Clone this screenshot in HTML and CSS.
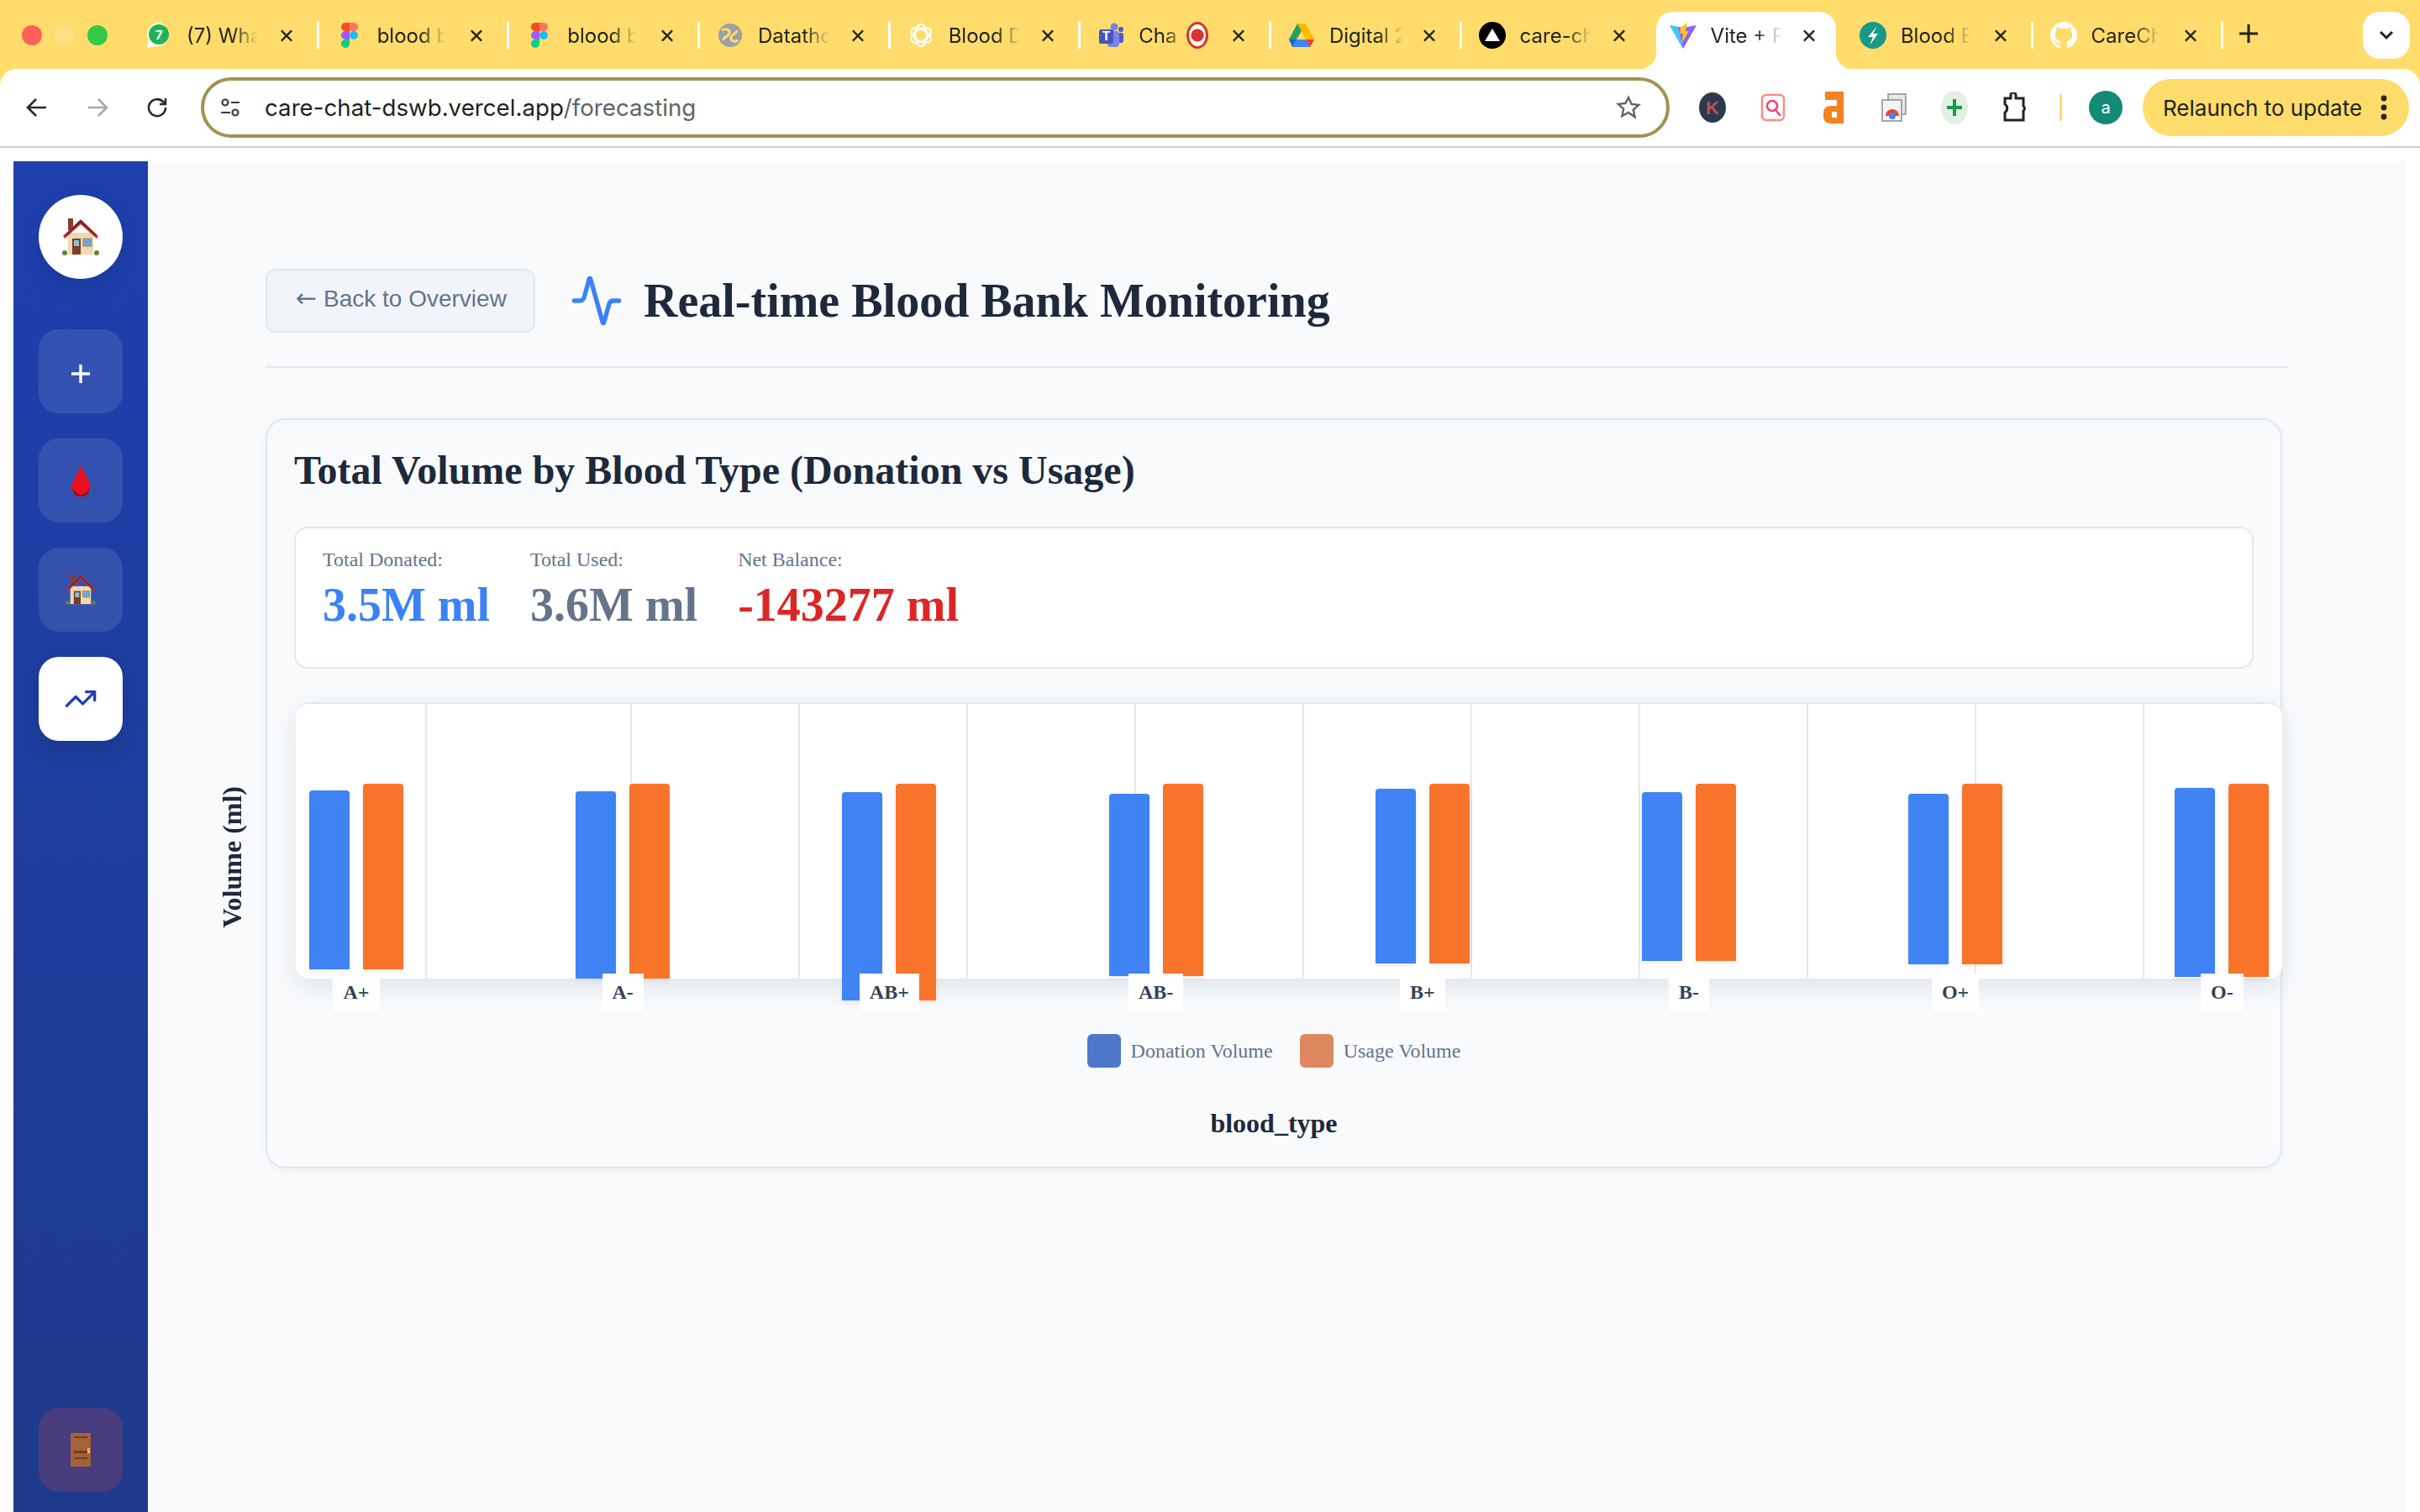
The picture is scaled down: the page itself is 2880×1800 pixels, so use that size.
FILE: index.html
```html
<!DOCTYPE html>
<html lang="en">
<head>
    <meta charset="UTF-8">
    <title>Vite + React</title>
    <link rel="stylesheet" href="styles.css">
</head>
<body>
    <svg class="icon-defs" width="0" height="0">
        <symbol id="close-x" viewBox="0 0 16 16"><path d="M1.5 1.5l13 13M14.5 1.5l-13 13" fill="none" stroke="#23231f" stroke-width="2.4"/></symbol>
        <symbol id="figma" viewBox="0 0 20 30">
            <path d="M5 0h5v10H5a5 5 0 0 1 0-10z" fill="#f24e1e"/>
            <path d="M10 0h5a5 5 0 0 1 0 10h-5z" fill="#ff7262"/>
            <path d="M5 10h5v10H5a5 5 0 0 1 0-10z" fill="#a259ff"/>
            <circle cx="15" cy="15" r="5" fill="#1abcfe"/>
            <path d="M5 20h5v5a5 5 0 1 1-5-5z" fill="#0acf83"/>
        </symbol>
        <symbol id="house" viewBox="0 0 44 46">
            <rect x="7" y="1" width="6" height="14" fill="#8a3a2c"/>
            <rect x="7" y="18" width="30" height="26" fill="#f0d9b0"/>
            <path d="M1 22L22 2l21 20-2 3L22 8 3 25z" fill="#c9322c"/>
            <path d="M22 3L3 21l1 1L22 6l18 16 1-1z" fill="#6d231f"/>
            <rect x="12" y="25" width="10" height="19" fill="#7a3f22"/>
            <rect x="14" y="27" width="6" height="7" fill="#8cc3e0"/>
            <rect x="25" y="25" width="10" height="9" fill="#6fa9cf" stroke="#9c8a66"/>
            <circle cx="3" cy="42" r="3" fill="#5c8a2e"/>
            <circle cx="41" cy="42" r="3" fill="#5c8a2e"/>
        </symbol>
        <symbol id="drop" viewBox="0 0 23 38">
            <path d="M11.5 0C9.500 9 3 15 1 23c-2 8 3 15 10.500 15S24 31 22 23C20 15 13.500 9 11.500 0z" fill="#e8101c"/>
            <path d="M2 27c1 6 5 9 9.500 9s8.500-3 9.500-9c1 8-4 11-9.500 11S1 35 2 27z" fill="#8f0a12"/>
        </symbol>
    </svg>

    <header class="browser">
        <div class="tabstrip">
            <div class="traffic">
                <span class="light light-red"></span>
                <span class="light light-amber"></span>
                <span class="light light-green"></span>
            </div>

            <div class="tab tab-sep">
                <svg class="favicon" viewBox="0 0 32 32"><path d="M16 1a14 14 0 0 0-12 21L2 31l9-2A14 14 0 1 0 16 1z" fill="#fff"/><circle cx="16" cy="15" r="12" fill="#1fb356"/><text x="16" y="21" class="favicon-text">7</text></svg>
                <span class="tab-title">(7) Wha</span>
                <svg class="tab-close"><use href="#close-x"/></svg>
            </div>
            <div class="tab tab-sep">
                <svg class="favicon favicon-figma"><use href="#figma"/></svg>
                <span class="tab-title">blood b</span>
                <svg class="tab-close"><use href="#close-x"/></svg>
            </div>
            <div class="tab tab-sep">
                <svg class="favicon favicon-figma"><use href="#figma"/></svg>
                <span class="tab-title">blood b</span>
                <svg class="tab-close"><use href="#close-x"/></svg>
            </div>
            <div class="tab tab-sep">
                <svg class="favicon" viewBox="0 0 32 32"><circle cx="16" cy="16" r="14" fill="#9aa0a6"/><path d="M6 10c6-3 10 0 9 4s-7 3-7 8M26 22c-6 3-10 0-9-4s7-3 7-8" fill="none" stroke="#ffdc6b" stroke-width="3"/></svg>
                <span class="tab-title">Datatho</span>
                <svg class="tab-close"><use href="#close-x"/></svg>
            </div>
            <div class="tab tab-sep">
                <svg class="favicon" viewBox="0 0 32 32"><g fill="none" stroke="#fff" stroke-width="2"><ellipse cx="16" cy="16" rx="7" ry="13"/><ellipse cx="16" cy="16" rx="7" ry="13" transform="rotate(60 16 16)"/><ellipse cx="16" cy="16" rx="7" ry="13" transform="rotate(120 16 16)"/></g></svg>
                <span class="tab-title">Blood D</span>
                <svg class="tab-close"><use href="#close-x"/></svg>
            </div>
            <div class="tab tab-sep">
                <svg class="favicon" viewBox="0 0 32 32"><circle cx="20" cy="6" r="4.5" fill="#7b83eb"/><circle cx="28" cy="9" r="3" fill="#5059c9"/><rect x="24" y="13" width="7" height="12" rx="3" fill="#5059c9"/><rect x="12" y="11" width="14" height="19" rx="4" fill="#7b83eb"/><rect x="2" y="9" width="17" height="17" rx="2" fill="#4b53bc"/><text x="10.5" y="22" class="favicon-text">T</text></svg>
                <span class="tab-title tab-title-short">Cha</span>
                <span class="record"></span>
                <svg class="tab-close"><use href="#close-x"/></svg>
            </div>
            <div class="tab tab-sep">
                <svg class="favicon" viewBox="0 0 32 32"><path d="M11 2h10L10 21H1z" fill="#1fa463"/><path d="M21 2l10 19H21L11 2z" fill="#ffba00"/><path d="M10 21h21l-5 9H5z" fill="#4285f4"/><path d="M26 30l5-9H21z" fill="#ea4335"/><path d="M5 30l5-9H1z" fill="#1967d2"/></svg>
                <span class="tab-title">Digital 2</span>
                <svg class="tab-close"><use href="#close-x"/></svg>
            </div>
            <div class="tab">
                <svg class="favicon" viewBox="0 0 32 32"><circle cx="16" cy="16" r="16" fill="#000"/><path d="M16 8l9 15H7z" fill="#fff"/></svg>
                <span class="tab-title">care-ch</span>
                <svg class="tab-close"><use href="#close-x"/></svg>
            </div>
            <div class="tab tab-active">
                <svg class="favicon" viewBox="0 0 32 32"><path d="M0 4l16 3 16-3-16 28z" fill="#8a63ff"/><path d="M0 4l10 2 6 26z" fill="#41c8fb"/><path d="M13 7l8-6-2 10h4l-9 15 2-12h-4z" fill="#ffc51c"/></svg>
                <span class="tab-title">Vite + R</span>
                <svg class="tab-close"><use href="#close-x"/></svg>
            </div>
            <div class="tab tab-sep">
                <svg class="favicon" viewBox="0 0 32 32"><circle cx="16" cy="16" r="16" fill="#169a87"/><path d="M21 5L10 18h6l-4 10 10-14h-6z" fill="#fff"/></svg>
                <span class="tab-title">Blood B</span>
                <svg class="tab-close"><use href="#close-x"/></svg>
            </div>
            <div class="tab tab-sep">
                <svg class="favicon" viewBox="0 0 16 16"><path fill="#fff" d="M8 0C3.58 0 0 3.58 0 8c0 3.54 2.29 6.53 5.47 7.59.4.07.55-.17.55-.38 0-.19-.01-.82-.01-1.49-2.01.37-2.53-.49-2.69-.94-.09-.23-.48-.94-.82-1.13-.28-.15-.68-.52-.01-.53.63-.01 1.08.58 1.23.82.72 1.21 1.87.87 2.33.66.07-.52.28-.87.51-1.07-1.78-.2-3.64-.89-3.64-3.95 0-.87.31-1.59.82-2.15-.08-.2-.36-1.02.08-2.12 0 0 .67-.21 2.2.82.64-.18 1.32-.27 2-.27s1.36.09 2 .27c1.53-1.04 2.2-.82 2.2-.82.44 1.1.16 1.92.08 2.12.51.56.82 1.27.82 2.15 0 3.07-1.87 3.75-3.65 3.95.29.25.54.73.54 1.48 0 1.07-.01 1.93-.01 2.2 0 .21.15.46.55.38A8.01 8.01 0 0 0 16 8c0-4.42-3.58-8-8-8z"/></svg>
                <span class="tab-title">CareCh</span>
                <svg class="tab-close"><use href="#close-x"/></svg>
            </div>

            <svg class="new-tab" viewBox="0 0 28 28"><path d="M14 3v22M3 14h22" stroke="#23231f" stroke-width="3" fill="none"/></svg>
            <div class="tab-search">
                <svg width="18" height="12" viewBox="0 0 18 12"><path d="M2 2l7 7 7-7" stroke="#23231f" stroke-width="3" fill="none"/></svg>
            </div>
        </div>

        <div class="toolbar">
            <div class="tool">
                <svg width="26" height="24" viewBox="0 0 26 24"><path d="M24 12H3M12 2L2 12l10 10" fill="none" stroke="#2a2a2a" stroke-width="2.6"/></svg>
            </div>
            <div class="tool">
                <svg width="26" height="24" viewBox="0 0 26 24"><path d="M2 12h21M14 2l10 10-10 10" fill="none" stroke="#a8a8a8" stroke-width="2.6"/></svg>
            </div>
            <div class="tool">
                <svg width="28" height="28" viewBox="0 0 28 28"><path d="M23 14a10 10 0 1 1-3-7l3 3M23 3v7h-7" fill="none" stroke="#2a2a2a" stroke-width="2.6"/></svg>
            </div>

            <div class="omnibox">
                <svg class="site-icon" width="24" height="24" viewBox="0 0 24 24"><g fill="none" stroke="#3c3c3c" stroke-width="2.2"><circle cx="6" cy="6" r="3.5"/><path d="M13 6h10M1 18h11"/><circle cx="18" cy="18" r="3.5"/></g></svg>
                <span class="url"><span class="url-host">care-chat-dswb.vercel.app</span>/forecasting</span>
                <svg class="star" width="30" height="30" viewBox="0 0 30 30"><path d="M15 3l3.6 8 8.6.9-6.4 5.8 1.8 8.5L15 21l-7.6 4.2 1.8-8.5-6.4-5.8 8.6-.9z" fill="none" stroke="#5f6368" stroke-width="2.4"/></svg>
            </div>

            <div class="extensions">
                <div class="tool"><svg width="32" height="36" viewBox="0 0 32 36"><ellipse cx="16" cy="18" rx="16" ry="18" fill="#2b3a4f"/><text x="16" y="26" class="ext-k">K</text></svg></div>
                <div class="tool"><svg width="30" height="34" viewBox="0 0 30 34"><rect x="2" y="2" width="26" height="30" rx="5" fill="#fff" stroke="#ff8a80" stroke-width="2.5"/><circle cx="14" cy="15" r="6" fill="none" stroke="#e8457a" stroke-width="2.5"/><path d="M18 20l6 7" stroke="#e8457a" stroke-width="2.5"/></svg></div>
                <div class="tool"><svg width="24" height="38" viewBox="0 0 24 38"><path d="M2 0h22v38H8a8 8 0 0 1-8-8v-5a8 8 0 0 1 8-8h8v-7H2zM10 24v7h6v-7z" fill="#f58220" fill-rule="evenodd"/></svg></div>
                <div class="tool"><svg width="30" height="34" viewBox="0 0 30 34"><rect x="8" y="1" width="21" height="24" fill="#e8e8e8" stroke="#8c8c8c" stroke-width="1.5"/><rect x="1" y="8" width="23" height="25" fill="#f4f4f4" stroke="#8c8c8c" stroke-width="1.5"/><path d="M5 27a8 8 0 0 1 16 0z" fill="#ea4335"/><circle cx="13" cy="27" r="4" fill="#4285f4"/></svg></div>
                <div class="tool"><svg width="32" height="40" viewBox="0 0 32 40"><ellipse cx="16" cy="20" rx="16" ry="20" fill="#e3f1e4"/><path d="M16 10v20M7 20h18" stroke="#169c4f" stroke-width="4"/></svg></div>
                <div class="tool"><svg width="30" height="36" viewBox="0 0 30 36"><path d="M3 7h7V3a3 3 0 0 1 6 0v4h9v9a4 4 0 0 1 0 6v11H3V24a6 6 0 0 0 0-10z" fill="none" stroke="#23231f" stroke-width="3"/></svg></div>
            </div>
            <span class="tool-divider"></span>
            <span class="avatar">a</span>
            <div class="relaunch">
                <span>Relaunch to update</span>
                <svg width="8" height="30" viewBox="0 0 8 30"><circle cx="4" cy="4" r="3.4" fill="#23231f"/><circle cx="4" cy="15" r="3.4" fill="#23231f"/><circle cx="4" cy="26" r="3.4" fill="#23231f"/></svg>
            </div>
        </div>
    </header>

    <div class="app">
        <aside class="sidebar">
            <div class="logo"><svg class="emoji-house-lg"><use href="#house"/></svg></div>
            <nav class="nav">
                <a class="nav-btn">
                    <svg width="24" height="24" viewBox="0 0 24 24" class="nav-plus"><path d="M12 1v22M1 12h22" stroke="#fff" stroke-width="3.4" fill="none"/></svg>
                </a>
                <a class="nav-btn"><svg class="emoji-drop"><use href="#drop"/></svg></a>
                <a class="nav-btn"><svg class="emoji-house"><use href="#house"/></svg></a>
                <a class="nav-btn nav-btn-active">
                    <svg width="40" height="40" viewBox="0 0 24 24" fill="none" stroke="#1e40af" stroke-width="2" stroke-linecap="round" stroke-linejoin="round"><polyline points="22 7 13.5 15.5 8.5 10.5 2 17"/><polyline points="16 7 22 7 22 13"/></svg>
                </a>
            </nav>
            <a class="nav-btn nav-btn-logout">
                <svg width="24" height="40" viewBox="0 0 24 40"><rect width="24" height="40" fill="#a5603c"/><g fill="#6f3d24"><rect x="4" y="4" width="16" height="2"/><rect x="4" y="21" width="16" height="3"/><rect x="4" y="29" width="16" height="2"/></g><rect x="20" y="18" width="3" height="6" fill="#e8c23a"/></svg>
            </a>
        </aside>

        <main class="main">
            <div class="page-head">
                <button type="button" class="back-btn"><span class="back-arrow">←</span> Back to Overview</button>
                <svg class="head-icon" width="64" height="64" viewBox="0 0 24 24" fill="none" stroke="#3b82f6" stroke-width="2" stroke-linecap="round" stroke-linejoin="round"><path d="M22 12h-2.48a2 2 0 0 0-1.93 1.46l-2.35 8.36a.25.25 0 0 1-.48 0L9.24 2.18a.25.25 0 0 0-.48 0l-2.35 8.36A2 2 0 0 1 4.49 12H2"/></svg>
                <h1>Real-time Blood Bank Monitoring</h1>
            </div>

            <section class="card">
                <h2>Total Volume by Blood Type (Donation vs Usage)</h2>

                <div class="stats">
                    <div class="stat">
                        <div class="stat-label">Total Donated:</div>
                        <div class="stat-value stat-blue">3.5M ml</div>
                    </div>
                    <div class="stat">
                        <div class="stat-label">Total Used:</div>
                        <div class="stat-value stat-slate">3.6M ml</div>
                    </div>
                    <div class="stat">
                        <div class="stat-label">Net Balance:</div>
                        <div class="stat-value stat-red">-143277 ml</div>
                    </div>
                </div>

                <div class="chart">
                    <div class="y-title">Volume (ml)</div>
                    <div class="plot">
                        <div class="grid-lines">
                            <span></span><span></span><span></span><span></span><span></span><span></span>
                            <span></span><span></span><span></span><span></span><span></span>
                        </div>
                        <div class="group">
                            <div class="bars">
                                <div class="bar bar-blue" style="margin-top:103px;height:213px"></div>
                                <div class="bar bar-orange" style="margin-top:95px;height:221px"></div>
                            </div>
                            <span class="tick">A+</span>
                        </div>
                        <div class="group">
                            <div class="bars">
                                <div class="bar bar-blue" style="margin-top:104px;height:223px"></div>
                                <div class="bar bar-orange" style="margin-top:95px;height:232px"></div>
                            </div>
                            <span class="tick">A-</span>
                        </div>
                        <div class="group">
                            <div class="bars">
                                <div class="bar bar-blue" style="margin-top:105px;height:248px"></div>
                                <div class="bar bar-orange" style="margin-top:95px;height:258px"></div>
                            </div>
                            <span class="tick">AB+</span>
                        </div>
                        <div class="group">
                            <div class="bars">
                                <div class="bar bar-blue" style="margin-top:107px;height:217px"></div>
                                <div class="bar bar-orange" style="margin-top:95px;height:229px"></div>
                            </div>
                            <span class="tick">AB-</span>
                        </div>
                        <div class="group">
                            <div class="bars">
                                <div class="bar bar-blue" style="margin-top:101px;height:208px"></div>
                                <div class="bar bar-orange" style="margin-top:95px;height:214px"></div>
                            </div>
                            <span class="tick">B+</span>
                        </div>
                        <div class="group">
                            <div class="bars">
                                <div class="bar bar-blue" style="margin-top:105px;height:201px"></div>
                                <div class="bar bar-orange" style="margin-top:95px;height:211px"></div>
                            </div>
                            <span class="tick">B-</span>
                        </div>
                        <div class="group">
                            <div class="bars">
                                <div class="bar bar-blue" style="margin-top:107px;height:203px"></div>
                                <div class="bar bar-orange" style="margin-top:95px;height:215px"></div>
                            </div>
                            <span class="tick">O+</span>
                        </div>
                        <div class="group">
                            <div class="bars">
                                <div class="bar bar-blue" style="margin-top:100px;height:225px"></div>
                                <div class="bar bar-orange" style="margin-top:95px;height:230px"></div>
                            </div>
                            <span class="tick">O-</span>
                        </div>
                    </div>

                    <div class="legend">
                        <span class="legend-swatch swatch-blue"></span>
                        <span class="legend-text">Donation Volume</span>
                        <span class="legend-swatch swatch-orange"></span>
                        <span class="legend-text">Usage Volume</span>
                    </div>
                    <div class="x-title">blood_type</div>
                </div>
            </section>
        </main>
    </div>
</body>
</html>
```

FILE: styles.css
```css
* {
    box-sizing: border-box;
}
html, body {
    height: 100%;
}
body {
    margin: 0;
    background: #fff;
    display: flex;
    flex-direction: column;
    overflow: hidden;
    font-family: "Liberation Serif", serif;
}
.icon-defs {
    position: absolute;
}

/* browser chrome */
.browser {
    background: #ffdc6b;
    font-family: Inter, "Liberation Sans", sans-serif;
    color: #23231f;
}
.tabstrip {
    display: flex;
    height: 82px;
    padding-left: 26px;
}
.traffic {
    display: flex;
    align-items: center;
    gap: 15px;
    height: 84px;
    margin-right: 21px;
    width: 104px;
}
.light {
    width: 24px;
    height: 24px;
    border-radius: 50%;
}
.light-red {
    background: #ff6058;
}
.light-amber {
    background: #ffe184;
}
.light-green {
    background: #35c94a;
}
.tab {
    position: relative;
    width: 226.67px;
    height: 68px;
    margin-top: 14px;
    padding: 0 29px 12px 22px;
    display: flex;
    align-items: center;
    font-size: 24px;
    flex-shrink: 0;
}
.tab-sep::after {
    content: "";
    position: absolute;
    right: -2px;
    top: 12px;
    width: 3px;
    height: 32px;
    background: #fff;
}
.tab-active {
    width: 214px;
    margin: 14px 6.33px 0;
    padding: 0 24px 12px 16px;
    background: #fff;
    border-radius: 20px 20px 0 0;
}
.tab-active::before,
.tab-active::after {
    content: "";
    position: absolute;
    bottom: 0;
    width: 20px;
    height: 20px;
}
.tab-active::before {
    left: -20px;
    background: radial-gradient(circle at 0 0, transparent 20px, #fff 20.5px);
}
.tab-active::after {
    right: -20px;
    background: radial-gradient(circle at 100% 0, transparent 20px, #fff 20.5px);
}
.favicon {
    width: 32px;
    height: 32px;
    flex-shrink: 0;
}
.favicon-figma {
    width: 20px;
    margin: 0 6px;
}
.favicon-text {
    font: bold 15px Inter, sans-serif;
    fill: #fff;
    text-anchor: middle;
}
.tab-title {
    margin-left: 17px;
    white-space: nowrap;
    -webkit-mask-image: linear-gradient(90deg, #000 calc(100% - 34px), transparent calc(100% - 4px));
    mask-image: linear-gradient(90deg, #000 calc(100% - 34px), transparent calc(100% - 4px));
}
.tab-title-short {
    -webkit-mask-image: linear-gradient(90deg, #000 calc(100% - 14px), rgba(0, 0, 0, 0.45));
    mask-image: linear-gradient(90deg, #000 calc(100% - 14px), rgba(0, 0, 0, 0.45));
}
.tab-close {
    width: 16px;
    height: 15px;
    margin-left: auto;
    flex-shrink: 0;
}
.record {
    width: 26px;
    height: 32px;
    margin-left: 12px;
    border-radius: 50%;
    border: 3px solid #d9342b;
    background: radial-gradient(circle, #d9342b 0 7px, #fff 8px);
    flex-shrink: 0;
}
.new-tab {
    width: 28px;
    height: 28px;
    margin: 26px 0 0 18px;
}
.tab-search {
    width: 56px;
    height: 56px;
    margin: 14px 12px 0 auto;
    border-radius: 20px;
    background: #fff;
    display: flex;
    align-items: center;
    justify-content: center;
}

.toolbar {
    display: flex;
    align-items: center;
    height: 94px;
    padding-left: 8px;
    background: #fff;
    border-radius: 20px 20px 0 0;
    border-bottom: 2px solid #cfcfcf;
}
.tool {
    width: 72px;
    display: flex;
    justify-content: center;
    align-items: center;
    flex-shrink: 0;
}
.omnibox {
    display: flex;
    align-items: center;
    width: 1748px;
    height: 72px;
    margin-left: 15px;
    padding: 0 30px 0 19px;
    border: 4px solid #a09352;
    border-radius: 36px;
}
.site-icon {
    flex-shrink: 0;
}
.url {
    margin-left: 29px;
    font-size: 27.7px;
    color: #5f6368;
}
.url-host {
    color: #1f1f1f;
}
.star {
    margin-left: auto;
}
.extensions {
    display: flex;
    margin-left: 15px;
}
.ext-k {
    font: bold 22px "Liberation Sans", sans-serif;
    fill: #c0504d;
    text-anchor: middle;
}
.tool-divider {
    width: 3px;
    height: 32px;
    margin-left: 17px;
    background: #ffdc6b;
}
.avatar {
    width: 40px;
    height: 40px;
    margin-left: 32px;
    border-radius: 50%;
    background: #138a76;
    color: #fff;
    font-size: 20px;
    display: flex;
    align-items: center;
    justify-content: center;
}
.relaunch {
    display: flex;
    align-items: center;
    justify-content: space-between;
    width: 317px;
    height: 68px;
    margin-left: 24px;
    padding: 0 26px 0 24px;
    border-radius: 34px;
    background: #ffdc6b;
    font-size: 26px;
    white-space: nowrap;
}

/* app */
.app {
    flex: 1;
    min-height: 0;
    display: flex;
    margin: 16px 16px 0;
    background: #f8fafc;
}
.sidebar {
    width: 160px;
    padding: 40px 0 24px;
    display: flex;
    flex-direction: column;
    align-items: center;
    background: linear-gradient(180deg, #1e40af, #1e3a8a);
}
.logo {
    width: 100px;
    height: 100px;
    margin-bottom: 60px;
    border-radius: 50%;
    background: #fff;
    box-shadow: 0 8px 24px rgba(0, 0, 0, 0.12);
    display: flex;
    align-items: center;
    justify-content: center;
}
.emoji-house-lg {
    width: 44px;
    height: 46px;
}
.emoji-house {
    width: 36px;
    height: 38px;
}
.emoji-drop {
    width: 23px;
    height: 38px;
}
.nav {
    display: flex;
    flex-direction: column;
    gap: 30px;
}
.nav-btn {
    width: 100px;
    height: 100px;
    border-radius: 24px;
    background: rgba(255, 255, 255, 0.1);
    display: flex;
    align-items: center;
    justify-content: center;
}
.nav-plus {
    margin-top: 6px;
}
.nav-btn-active {
    background: #fff;
    box-shadow: 0 8px 24px rgba(0, 0, 0, 0.12);
}
.nav-btn-logout {
    margin-top: auto;
    background: rgba(239, 68, 68, 0.2);
}

.main {
    flex: 1;
    min-width: 0;
    padding: 128px 140px 0;
}
.page-head {
    display: flex;
    align-items: center;
    height: 118px;
    padding-bottom: 41px;
    border-bottom: 2px solid #e2e8f0;
    margin-bottom: 60px;
}
.back-btn {
    width: 321px;
    height: 76px;
    padding: 0 0 3px 2px;
    border: 2px solid #e2e8f0;
    border-radius: 12px;
    background: #f1f5f9;
    color: #64748b;
    font-family: "Liberation Sans", sans-serif;
    font-size: 28px;
}
.back-arrow {
    font-family: "DejaVu Sans", sans-serif;
    font-size: 30px;
    line-height: 1;
    font-weight: normal;
}
.head-icon {
    margin-left: 41px;
}
h1 {
    margin: 0 0 0 24px;
    font-size: 56px;
    line-height: 64px;
    color: #1e293b;
}
.card {
    width: 2400px;
    padding: 32px 32px 34px;
    border: 2px solid #e2e8f0;
    border-radius: 24px;
    background: #f8fafc;
    box-shadow: 0 4px 12px rgba(0, 0, 0, 0.04);
}
h2 {
    margin: 0 0 39px;
    font-size: 48px;
    line-height: 56px;
    color: #1e293b;
}
.stats {
    display: flex;
    gap: 48px;
    padding: 23px 32px 42px;
    border: 2px solid #e2e8f0;
    border-radius: 16px;
    background: #fff;
}
.stat-label {
    margin-bottom: 8px;
    font-size: 24px;
    line-height: 28px;
    color: #64748b;
}
.stat-value {
    font-size: 56px;
    line-height: 64px;
    font-weight: bold;
}
.stat-blue {
    color: #3b82f6;
}
.stat-slate {
    color: #64748b;
}
.stat-red {
    color: #dc2626;
}

/* chart */
.chart {
    position: relative;
    margin-top: 40px;
}
.y-title {
    position: absolute;
    left: -92px;
    top: 100px;
    writing-mode: vertical-rl;
    transform: rotate(180deg);
    font-size: 32px;
    line-height: 36px;
    font-weight: bold;
    color: #1e293b;
}
.plot {
    position: relative;
    display: flex;
    gap: 205.2px;
    width: 2364px;
    height: 329px;
    margin-left: 2px;
    padding-left: 16px;
    border-top: 2px solid #e2e8f0;
    border-radius: 16px;
    background: #fff;
    box-shadow: 0 10px 30px rgba(100, 116, 139, 0.16);
}
.grid-lines {
    position: absolute;
    inset: 0;
    display: flex;
}
.grid-lines span {
    width: 200px;
    flex-shrink: 0;
    border-right: 2px solid #e5e7eb;
}
.grid-lines span:first-child {
    width: 156px;
}
.grid-lines span:nth-child(2) {
    width: 244px;
}
.group {
    position: relative;
    width: 112px;
    display: flex;
    flex-direction: column;
    align-items: center;
    flex-shrink: 0;
}
.bars {
    display: flex;
    gap: 16px;
    height: 321px;
    flex-shrink: 0;
}
.bar {
    width: 48px;
    border-radius: 4px 4px 0 0;
    box-shadow: 0 2px 6px rgba(0, 0, 0, 0.08);
}
.bar-blue {
    background: #3f83f5;
}
.bar-orange {
    background: #f9742b;
}
.tick {
    z-index: 1;
    flex-shrink: 0;
    padding: 8px 12px;
    background: #fff;
    font-size: 24px;
    line-height: 28px;
    font-weight: bold;
    color: #334155;
}
.legend {
    display: flex;
    align-items: center;
    justify-content: center;
    margin-top: 66px;
}
.legend-swatch {
    width: 40px;
    height: 40px;
    border-radius: 6px;
}
.swatch-blue {
    background: #4d78ca;
}
.swatch-orange {
    background: #dd8860;
}
.legend-text {
    margin: 0 32px 0 12px;
    font-size: 24px;
    color: #64748b;
}
.legend-text:last-child {
    margin-right: 0;
}
.x-title {
    margin-top: 48px;
    text-align: center;
    font-size: 32px;
    line-height: 36px;
    font-weight: bold;
    color: #1e293b;
}
```
